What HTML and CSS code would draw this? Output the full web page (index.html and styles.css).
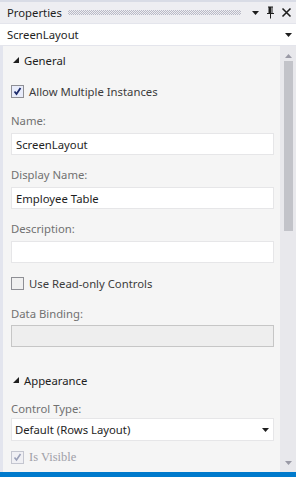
FILE: index.html
```html
<!DOCTYPE html>
<html>
<head>
<meta charset="utf-8">
<link rel="stylesheet" href="styles.css">
</head>
<body>
<div class="panel">
  <div class="titlebar">
    <span class="title">Properties</span>
    <span class="grip"></span>
    <svg class="tb-icon" width="9" height="9" viewBox="0 0 9 9"><path d="M1 3h7L4.5 7z" fill="#1e1e1e"/></svg>
    <svg class="tb-icon" width="9" height="13" viewBox="0 0 9 13"><path d="M2 1h5M3 1v6M6 1v6M1 7.5h7M4.5 8v4.5" stroke="#1e1e1e" stroke-width="1" fill="none"/><rect x="3" y="1" width="2" height="6" fill="#1e1e1e"/></svg>
    <svg class="tb-icon" width="11" height="11" viewBox="0 0 11 11"><path d="M1.5 1.5l8 8M9.5 1.5l-8 8" stroke="#1e1e1e" stroke-width="1.6"/></svg>
  </div>
  <div class="selector">
    <span>ScreenLayout</span>
    <svg width="9" height="9" viewBox="0 0 9 9"><path d="M1 3h7L4.5 7z" fill="#1e1e1e"/></svg>
  </div>
  <div class="main">
    <div class="content">
      <div class="section-head"><span class="tri"></span>General</div>
      <label class="check"><span class="box checked"><svg width="9" height="9" viewBox="0 0 9 9"><path d="M1.5 4.5l2 2.5 4-6" stroke="#1b2a6b" stroke-width="1.8" fill="none"/></svg></span>Allow Multiple Instances</label>
      <div class="field-label">Name:</div>
      <div class="input">ScreenLayout</div>
      <div class="field-label">Display Name:</div>
      <div class="input">Employee Table</div>
      <div class="field-label">Description:</div>
      <div class="input"></div>
      <label class="check"><span class="box"></span>Use Read-only Controls</label>
      <div class="field-label short">Data Binding:</div>
      <div class="input disabled"></div>
      <div class="section-head"><span class="tri"></span>Appearance</div>
      <div class="field-label tight">Control Type:</div>
      <div class="input combo"><span>Default (Rows Layout)</span><svg width="9" height="9" viewBox="0 0 9 9"><path d="M1 3h7L4.5 7z" fill="#1e1e1e"/></svg></div>
      <label class="check dim"><span class="box checked faded"><svg width="9" height="9" viewBox="0 0 9 9"><path d="M1.5 4.5l2 2.5 4-6" stroke="#9aa0b8" stroke-width="1.6" fill="none"/></svg></span>Is Visible</label>
    </div>
    <div class="scrollbar">
      <svg class="arrow" width="9" height="6" viewBox="0 0 9 6"><path d="M1 5h7L4.5 1z" fill="#9a9aa6"/></svg>
      <div class="track"><div class="thumb"></div></div>
      <svg class="arrow" width="9" height="6" viewBox="0 0 9 6"><path d="M1 1h7L4.5 5z" fill="#9a9aa6"/></svg>
    </div>
  </div>
  <div class="statusbar"></div>
</div>
</body>
</html>
```
FILE: styles.css
```css
html, body {
  margin: 0;
  padding: 0;
}
body {
  width: 296px;
  height: 477px;
  overflow: hidden;
  background: #eeeef2;
  font-family: "Noto Sans", "Open Sans", sans-serif;
  font-size: 11.3px;
  color: #1e1e1e;
}
.panel {
  display: flex;
  flex-direction: column;
  height: 477px;
  border-top: 2px solid #d9dce6;
  box-sizing: border-box;
}
.titlebar {
  height: 21px;
  display: flex;
  align-items: center;
  padding: 0 4px 0 7px;
  background: #eeeef2;
  gap: 6px;
}
.title {
  color: #1e1e1e;
  margin-right: 0;
}
.grip {
  flex: 1;
  height: 5px;
  margin: 0 4px 0 0;
  background: repeating-conic-gradient(#b9b9c6 0 25%, transparent 0 50%) 0 0 / 2px 2px;
}
.tb-icon {
  flex: none;
}
.selector {
  height: 21px;
  display: flex;
  align-items: center;
  justify-content: space-between;
  padding: 0 3px 0 7px;
  background: #ffffff;
  border-top: 1px solid #e4e5ec;
  border-bottom: 1px solid #e4e5ec;
}
.main {
  flex: 1;
  display: flex;
  min-height: 0;
  border-left: 3px solid #e3e5ee;
}
.content {
  flex: 1;
  background: #f5f5f5;
  padding: 6px 6px 0 8px;
  display: flex;
  flex-direction: column;
  overflow: hidden;
}
.section-head {
  height: 16px;
  flex: none;
  display: flex;
  align-items: center;
  color: #1e1e1e;
  margin-bottom: 15px;
}
.tri {
  width: 0;
  height: 0;
  border-left: 6px solid transparent;
  border-bottom: 6px solid #1e1e1e;
  margin: 0 5px 0 2px;
}
.check {
  display: flex;
  flex: none;
  align-items: center;
  height: 16px;
  color: #3c3c3c;
  margin-bottom: 14px;
}
.check + .field-label.short {
  margin-top: 1px;
}
.check.dim {
  color: #a0a0a8;
  font-family: "Liberation Serif", serif;
  font-size: 12.5px;
  margin-bottom: 0;
}
.box {
  width: 11px;
  height: 11px;
  border: 1px solid #8e8f95;
  background: #f0f0f0;
  margin: 0 5px 0 0;
  display: flex;
  align-items: center;
  justify-content: center;
  flex: none;
}
.box.checked {
  background: #e8ecfb;
}
.box.faded {
  border-color: #c4c6d0;
  background: #f0f0f4;
}
.field-label {
  color: #717171;
  flex: none;
  height: 16px;
  line-height: 16px;
  margin-bottom: 4px;
}
.field-label.short {
  margin-bottom: 3px;
}
.field-label.tight {
  margin-bottom: 1px;
}
.input {
  height: 20px;
  flex: none;
  background: #ffffff;
  border: 1px solid #e6e6e8;
  display: flex;
  align-items: center;
  padding: 0 4px;
  margin-bottom: 12px;
}
.input.disabled {
  background: #eeeeee;
  border-color: #c6c6c6;
  margin-bottom: 25px;
}
.section-head + .field-label.tight {
  margin-top: -2px;
}
.input.combo {
  justify-content: space-between;
  padding: 0 3px 0 3px;
  margin-bottom: 8px;
  height: 21px;
}
.scrollbar {
  width: 16px;
  background: #e8e8ec;
  display: flex;
  flex-direction: column;
  align-items: center;
  padding: 7px 0 6px 0;
}
.arrow {
  flex: none;
}
.track {
  flex: 1;
  width: 100%;
  display: flex;
  justify-content: center;
  padding-top: 2px;
}
.thumb {
  width: 9px;
  height: 170px;
  background: #c2c3c9;
}
.statusbar {
  height: 5px;
  background: #007acc;
}
```
